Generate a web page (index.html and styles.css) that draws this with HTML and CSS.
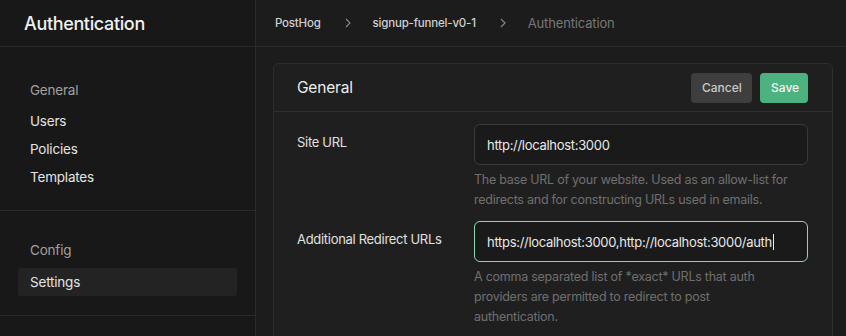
FILE: index.html
```html
<!DOCTYPE html>
<html lang="en">
<head>
    <meta charset="UTF-8">
    <meta name="viewport" content="width=device-width, initial-scale=1.0">
    <title>Authentication - Settings</title>
    <link rel="stylesheet" href="styles.css">
</head>
<body>

    <aside class="sidebar">
        <div class="sidebar-header">
            <h1>Authentication</h1>
        </div>
        <div class="sidebar-section">
            <div class="section-title">General</div>
            <ul>
                <li><a href="#">Users</a></li>
                <li><a href="#">Policies</a></li>
                <li><a href="#">Templates</a></li>
            </ul>
        </div>
        <div class="sidebar-section second">
            <div class="section-title">Config</div>
            <ul>
                <li class="active"><a href="#">Settings</a></li>
            </ul>
        </div>
    </aside>

    <div class="main">
        <header class="topbar">
            <span class="crumb">PostHog</span>
            <svg class="sep" width="6" height="10" viewBox="0 0 6 10"><path d="M1 1l4 4-4 4" fill="none" stroke="#8a8a8a" stroke-width="1.1"/></svg>
            <span class="crumb">signup-funnel-v0-1</span>
            <svg class="sep" width="6" height="10" viewBox="0 0 6 10"><path d="M1 1l4 4-4 4" fill="none" stroke="#8a8a8a" stroke-width="1.1"/></svg>
            <span class="crumb current">Authentication</span>
        </header>

        <main class="content">
            <section class="card">
                <div class="card-header">
                    <h2>General</h2>
                    <div class="actions">
                        <button class="btn btn-cancel">Cancel</button>
                        <button class="btn btn-save">Save</button>
                    </div>
                </div>
                <div class="card-body">
                    <div class="field">
                        <label>Site URL</label>
                        <div class="control">
                            <div class="input">http://localhost:3000</div>
                            <p class="help">The base URL of your website. Used as an allow-list for redirects and for constructing URLs used in emails.</p>
                        </div>
                    </div>
                    <div class="field">
                        <label>Additional Redirect URLs</label>
                        <div class="control">
                            <div class="input focused">https://localhost:3000,http://localhost:3000/auth<span class="caret"></span></div>
                            <p class="help">A comma separated list of *exact* URLs that auth providers are permitted to redirect to post authentication.</p>
                        </div>
                    </div>
                </div>
            </section>
        </main>
    </div>

</body>
</html>
```

FILE: styles.css
```css
body {
    font-family: Inter, "Noto Sans", sans-serif;
    margin: 0;
    padding: 0;
    background-color: #1c1c1c;
    color: #ededed;
    display: flex;
    height: 336px;
    overflow: hidden;
}

.sidebar {
    width: 255px;
    flex-shrink: 0;
    background-color: #181818;
    border-right: 1px solid #2a2a2a;
}

.sidebar-header {
    height: 46px;
    border-bottom: 1px solid #2a2a2a;
    display: flex;
    align-items: center;
    padding-left: 24px;
}

.sidebar-header h1 {
    margin: 0;
    font-size: 18px;
    font-weight: 500;
    letter-spacing: -0.35px;
    color: #f0f0f0;
}

.sidebar-section {
    border-bottom: 1px solid #2a2a2a;
    padding: 24px 18px 19px;
}

.section-title {
    color: #a0a0a0;
    font-size: 13.5px;
    letter-spacing: -0.2px;
    padding-left: 12px;
    height: 36px;
    line-height: 38px;
}

.sidebar ul {
    list-style: none;
    margin: 0;
    padding: 0;
}

.sidebar li {
    height: 28px;
    line-height: 28px;
    border-radius: 3px;
}

.sidebar li a {
    display: block;
    padding-left: 12px;
    color: #e4e4e4;
    text-decoration: none;
    font-size: 13.5px;
    letter-spacing: -0.2px;
}

.sidebar li.active {
    background-color: #232323;
}

.sidebar-section.second .section-title {
    height: 33px;
    line-height: 30px;
}

.main {
    flex: 1;
    min-width: 0;
}

.topbar {
    height: 46px;
    border-bottom: 1px solid #2a2a2a;
    display: flex;
    align-items: center;
    padding-left: 19px;
    font-size: 11.5px;
    font-weight: 500;
    letter-spacing: -0.2px;
}

.crumb {
    color: #d0d0d0;
}

.crumb.current {
    color: #777;
    font-weight: 400;
    font-size: 13px;
    letter-spacing: -0.15px;
}

.sep {
    margin: 0 22px 0 24px;
}

.content {
    padding: 16px 13px 0 17px;
}

.card {
    background-color: #1f1f1f;
    border: 1px solid #2e2e2e;
    border-radius: 6px;
}

.card-header {
    height: 47px;
    border-bottom: 1px solid #2e2e2e;
    display: flex;
    align-items: center;
    justify-content: space-between;
    padding: 0 24px 0 23px;
}

.card-header h2 {
    margin: 0;
    font-size: 15.5px;
    font-weight: 400;
    letter-spacing: -0.2px;
    color: #ededed;
}

.actions {
    display: flex;
    gap: 8px;
}

.btn {
    font-family: inherit;
    font-size: 12px;
    font-weight: 500;
    border: none;
    border-radius: 4px;
    height: 30px;
    padding: 0 11px;
    cursor: pointer;
}

.btn-cancel {
    background-color: #3e3e3e;
    color: #c8c8c8;
    width: 61px;
}

.btn-save {
    background-color: #4cb380;
    color: #f4f4f4;
    width: 48px;
}

.card-body {
    padding: 12px 24px 24px 23px;
}

.field {
    display: flex;
    margin-bottom: 11px;
}

.field label {
    width: 177px;
    flex-shrink: 0;
    font-size: 13px;
    letter-spacing: -0.3px;
    color: #e0e0e0;
    padding-top: 10px;
}

.control {
    flex: 1;
}

.input {
    height: 41px;
    box-sizing: border-box;
    border: 1px solid #3a3a3a;
    border-radius: 6px;
    background-color: #1a1a1a;
    padding: 0 12px;
    display: flex;
    align-items: center;
    font-size: 13px;
    letter-spacing: -0.3px;
    color: #e8e8e8;
    white-space: nowrap;
}

.input.focused {
    border-color: #8fd6b0;
}

.caret {
    display: inline-block;
    width: 1px;
    height: 16px;
    background-color: #eee;
    margin-left: 1px;
}

.help {
    margin: 5px 0 0;
    max-width: 320px;
    font-size: 12.5px;
    letter-spacing: -0.25px;
    line-height: 20px;
    color: #6f6f6f;
}
```
